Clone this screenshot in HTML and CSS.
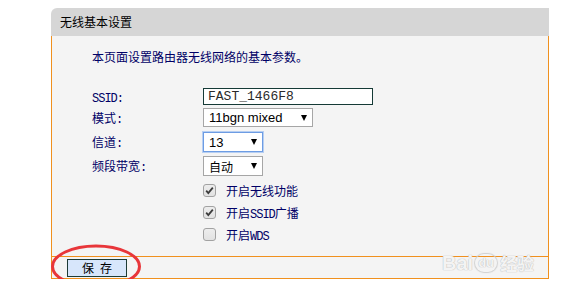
FILE: index.html
```html
<!DOCTYPE html>
<html>
<head>
<meta charset="utf-8">
<link rel="stylesheet" href="styles.css">
</head>
<body>
<div class="panel">
  <div class="head">无线基本设置</div>
  <div class="content">
    <p class="desc">本页面设置路由器无线网络的基本参数。</p>
    <div class="form">
      <div class="row"><span class="lbl"><span class="en">SSID:</span></span><input class="ssid" type="text" value="FAST_1466F8"></div>
      <div class="row"><span class="lbl">模式<span class="en">:</span></span><span class="sel"><select class="select wide"><option>11bgn mixed</option></select></span></div>
      <div class="row"><span class="lbl">信道<span class="en">:</span></span><span class="sel"><select class="select narrow focus"><option>13</option></select></span></div>
      <div class="row"><span class="lbl">频段带宽<span class="en">:</span></span><span class="sel"><select class="select narrow cjk"><option>自动</option></select></span></div>
      <div class="row"><span class="lbl"></span><span class="cb"><svg width="11" height="11" viewBox="0 0 11 11"><path d="M2.2 5.6 L4.3 8 L8.8 2.6" fill="none" stroke="#3c3c3c" stroke-width="1.8"/></svg></span><span class="cbl">开启无线功能</span></div>
      <div class="row"><span class="lbl"></span><span class="cb"><svg width="11" height="11" viewBox="0 0 11 11"><path d="M2.2 5.6 L4.3 8 L8.8 2.6" fill="none" stroke="#3c3c3c" stroke-width="1.8"/></svg></span><span class="cbl">开启<span class="en">SSID</span>广播</span></div>
      <div class="row"><span class="lbl"></span><span class="cb"></span><span class="cbl">开启<span class="en">WDS</span></span></div>
    </div>
  </div>
  <div class="foot"><button class="btn">保<span class="gap"></span>存</button></div>
  <svg class="mark" width="100" height="46" viewBox="0 0 100 46"><ellipse cx="45" cy="22.5" rx="43.5" ry="20.5" fill="none" stroke="#e8363a" stroke-width="3"/></svg>
  <div class="wm">
    <div class="wm-top"><span class="wm-bai">Bai</span><span class="wm-du">du</span><span class="wm-jy">经验</span></div>
    <div class="wm-url">jingyan.baidu.com</div>
  </div>
</div>
</body>
</html>
```

FILE: styles.css
```css
body {
  margin: 0;
  background: #ffffff;
  font-family: "Noto Sans CJK SC", "Liberation Sans", sans-serif;
}

.panel {
  position: relative;
  width: 498px;
  margin: 8px 0 0 51px;
}

.head {
  height: 28px;
  line-height: 28px;
  background: #d6d6d6;
  border-top-left-radius: 6px;
  padding-left: 9px;
  font-size: 12px;
  color: #000000;
}

.content {
  background: #f4f4f4;
  border-left: 1px solid #f0901e;
  border-right: 1px solid #f0901e;
  padding: 13px 0 7px 40px;
}

.desc {
  margin: 0;
  height: 16px;
  line-height: 16px;
  font-size: 12px;
  color: #000066;
}

.form {
  margin-top: 21px;
  display: grid;
  grid-template-rows: 21px 21px 28px 20px 29px 15px 29px;
}

.row {
  display: flex;
  align-items: center;
}

.lbl {
  width: 111px;
  flex: none;
  font-size: 12px;
  color: #000066;
}

.en {
  font-family: "Liberation Mono", monospace;
  font-size: 12px;
  letter-spacing: -1px;
}

.ssid {
  box-sizing: border-box;
  width: 170px;
  height: 17px;
  margin: 0;
  padding: 0 4px;
  border: 1px solid #153a36;
  background: #ffffff;
  font-family: "Liberation Mono", monospace;
  font-size: 13px;
  color: #2a2a2a;
  outline: none;
}

.sel {
  position: relative;
  display: inline-block;
  line-height: 0;
}

.sel::after {
  content: "";
  position: absolute;
  right: 6px;
  top: 50%;
  margin-top: -3px;
  border-left: 3px solid transparent;
  border-right: 3px solid transparent;
  border-top: 6px solid #000000;
  pointer-events: none;
}

.select {
  -webkit-appearance: none;
  appearance: none;
  box-sizing: border-box;
  margin: 0;
  padding: 0 0 0 5px;
  border: 1px solid #a6a6a6;
  border-radius: 0;
  background: #ffffff;
  font-family: "Liberation Sans", sans-serif;
  font-size: 13px;
  color: #000000;
  outline: none;
}

.wide {
  width: 110px;
  height: 19px;
}

.narrow {
  width: 60px;
  height: 20px;
}

.cjk {
  font-family: "Noto Sans CJK SC", sans-serif;
  font-size: 12px;
}

.focus {
  border-color: #6d9ce3;
  box-shadow: 0 0 0 1px #b7cff2;
}

.cb {
  box-sizing: border-box;
  width: 13px;
  height: 13px;
  flex: none;
  border: 1px solid #a2a2a2;
  border-radius: 3px;
  background: linear-gradient(#ededed, #e2e2e2);
  display: flex;
  align-items: center;
  justify-content: center;
}

.cbl {
  margin-left: 10px;
  font-size: 12px;
  color: #000066;
}

.foot {
  box-sizing: border-box;
  height: 23px;
  border: 1px solid #f0901e;
  background: #f4f4f4;
  display: flex;
  align-items: center;
  padding-left: 15px;
}

.btn {
  box-sizing: border-box;
  width: 60px;
  height: 18px;
  margin: 0;
  padding: 0;
  border: 1px solid #1d3b36;
  border-radius: 0;
  background: #d7e6fb;
  font-family: "Noto Sans CJK SC", sans-serif;
  font-size: 12px;
  line-height: 16px;
  color: #000000;
  display: flex;
  align-items: center;
  justify-content: center;
}

.gap {
  display: inline-block;
  width: 6px;
}

.mark {
  position: absolute;
  left: 0;
  top: 236px;
}

.wm {
  position: absolute;
  left: 391px;
  top: 237px;
  width: 110px;
  color: rgba(255, 255, 255, 0.85);
  text-shadow: 0 0 1px #b8b8b8, 0 0 1px #c4c4c4;
  font-family: "Liberation Sans", sans-serif;
  font-weight: bold;
}

.wm-top {
  display: flex;
  align-items: flex-end;
  height: 28px;
}

.wm-bai {
  font-size: 20px;
  line-height: 20px;
}

.wm-du {
  font-size: 13px;
  line-height: 18px;
  width: 22px;
  height: 18px;
  text-align: center;
  border-radius: 9px;
  box-shadow: 0 0 1px 1px #d0d0d0;
  margin: 0 3px 1px 2px;
}

.wm-jy {
  font-family: "Noto Sans CJK SC", sans-serif;
  font-size: 17px;
  line-height: 20px;
}

.wm-url {
  margin-top: 5px;
  font-size: 12px;
  line-height: 14px;
  letter-spacing: 0.2px;
}
```
